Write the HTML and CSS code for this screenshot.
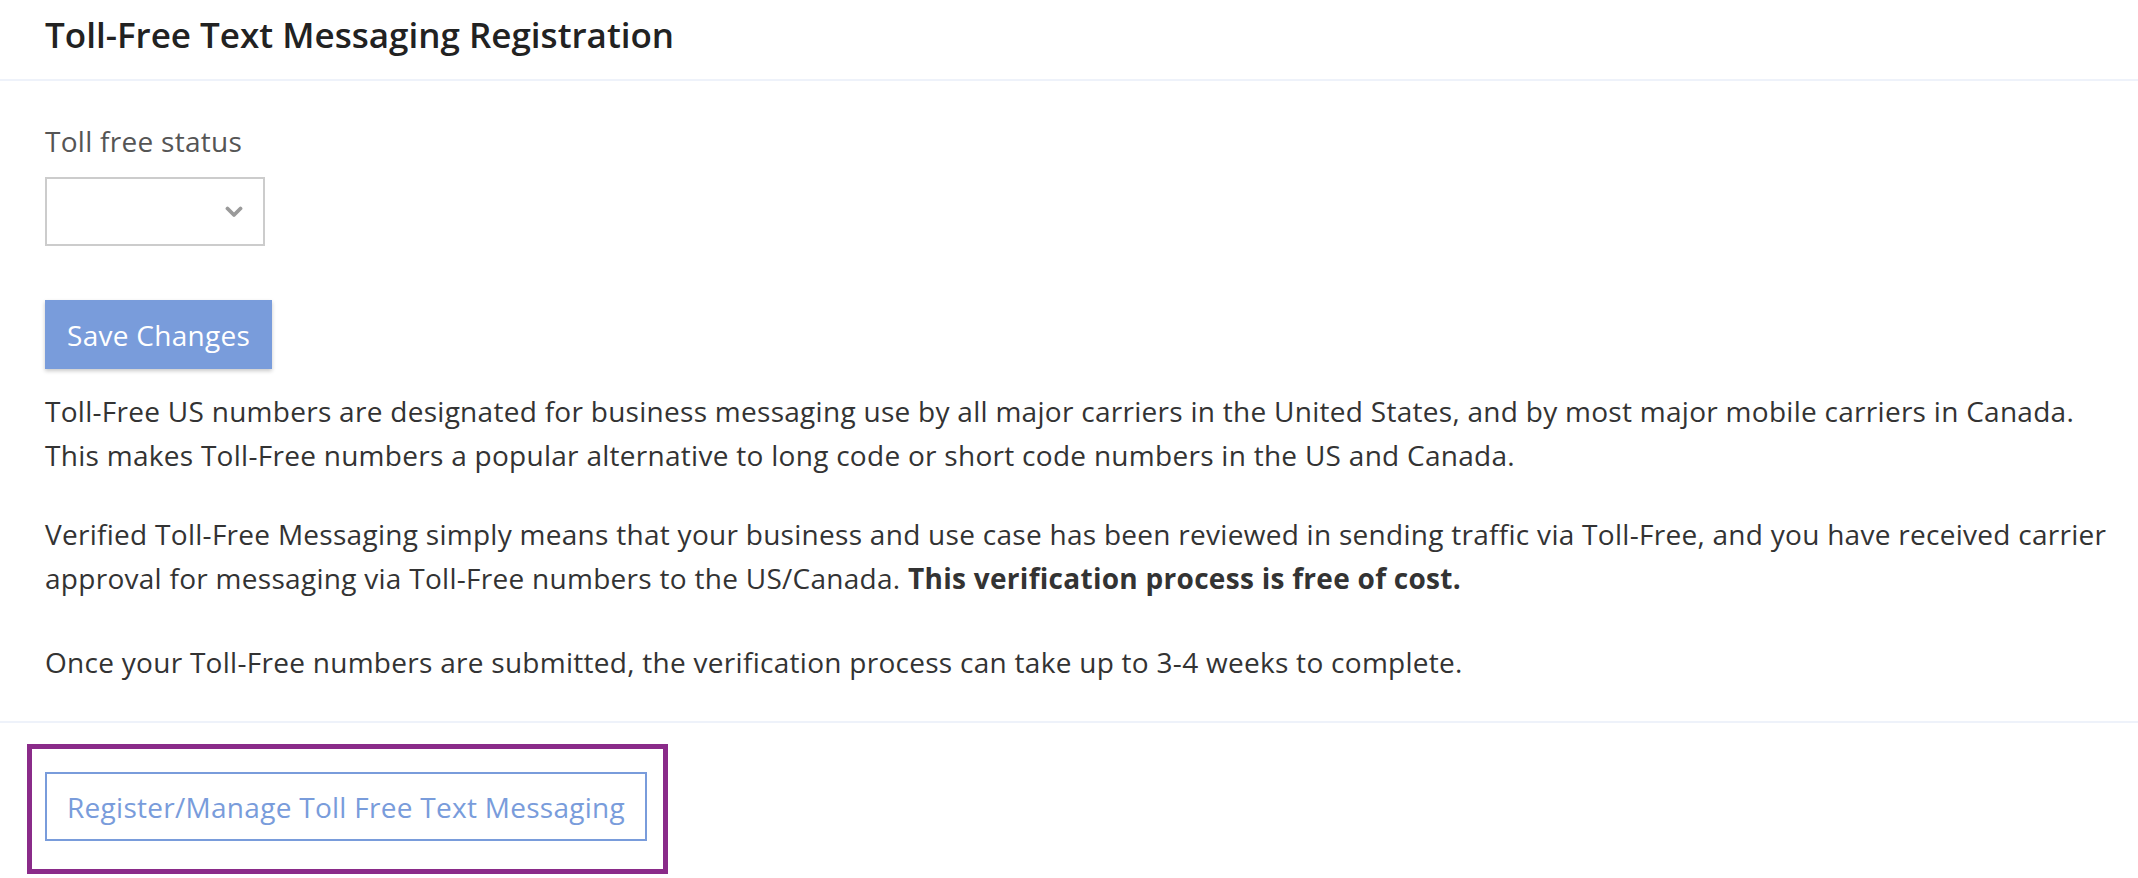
FILE: index.html
```html
<!DOCTYPE html>
<html lang="en">
<head>
<meta charset="utf-8">
<title>Toll-Free Text Messaging Registration</title>
<link rel="stylesheet" href="styles.css">
</head>
<body>
<div class="panel">
  <div class="panel-header">
    <h2 class="panel-title">Toll-Free Text Messaging Registration</h2>
  </div>
  <div class="panel-body">
    <label class="field-label">Toll free status</label>
    <div class="select-box">
      <svg class="chevron" width="18" height="12" viewBox="0 0 18 12"><polyline points="2.5,2.5 9,9 15.5,2.5" fill="none" stroke="#9a9a9a" stroke-width="3.8" stroke-linecap="round" stroke-linejoin="round"/></svg>
    </div>
    <button class="btn-primary" type="button">Save Changes</button>
    <p class="copy copy-1">Toll-Free US numbers are designated for business messaging use by all major carriers in the United States, and by most major mobile carriers in Canada.<br>This makes Toll-Free numbers a popular alternative to long code or short code numbers in the US and Canada.</p>
    <p class="copy copy-2">Verified Toll-Free Messaging simply means that your business and use case has been reviewed in sending traffic via Toll-Free, and you have received carrier approval for messaging via Toll-Free numbers to the US/Canada. <strong>This verification process is free of cost.</strong></p>
    <p class="copy copy-3">Once your Toll-Free numbers are submitted, the verification process can take up to 3-4 weeks to complete.</p>
  </div>
  <div class="panel-footer">
    <div class="highlight">
      <button class="btn-outline" type="button">Register/Manage Toll Free Text Messaging</button>
    </div>
  </div>
</div>
</body>
</html>
```

FILE: styles.css
```css
* { box-sizing: border-box; }
html, body { margin: 0; padding: 0; background: #ffffff; }
body {
  font-family: "Open Sans", "Noto Sans", sans-serif;
  font-size: 28px;
  line-height: 44px;
  letter-spacing: 0.28px;
  color: #333333;
}
.panel { width: 100%; }
.panel-header {
  padding: 13px 45px 22px;
  border-bottom: 2px solid #eef2fa;
}
.panel-title {
  margin: 0;
  font-size: 35px;
  line-height: 44px;
  font-weight: 600;
  letter-spacing: 0;
  color: #222222;
}
.panel-body {
  padding: 38px 12px 37px 45px;
  display: flex;
  flex-direction: column;
  align-items: flex-start;
}
.field-label {
  color: #555555;
  line-height: 44px;
}
.select-box {
  margin-top: 14px;
  width: 220px;
  height: 69px;
  border: 2px solid #cccccc;
  background: #fff;
  display: flex;
  align-items: center;
  justify-content: flex-end;
  padding-right: 20px;
}
.chevron { display: block; }
.btn-primary {
  margin-top: 54px;
  height: 69px;
  padding: 0 22px;
  border: 0;
  background: #799cdb;
  color: #ffffff;
  font-family: inherit;
  font-size: 28px;
  line-height: 44px;
  letter-spacing: inherit;
  box-shadow: 0 2px 4px rgba(0,0,0,0.22);
}
.copy { margin: 0; }
.copy-1 { margin-top: 20px; }
.copy-2 { margin-top: 35px; }
.copy-3 { margin-top: 40px; }
.panel-footer {
  border-top: 2px solid #eef2fa;
  padding: 21px 0 0 27px;
}
.highlight {
  display: inline-block;
  border: 5px solid #8a2b89;
  padding: 23px 16px 28px 13px;
}
.btn-outline {
  display: block;
  height: 69px;
  padding: 0 20px;
  border: 2px solid #799cdb;
  background: #ffffff;
  color: #799cdb;
  font-family: inherit;
  font-size: 28px;
  line-height: 44px;
  letter-spacing: inherit;
}
```
